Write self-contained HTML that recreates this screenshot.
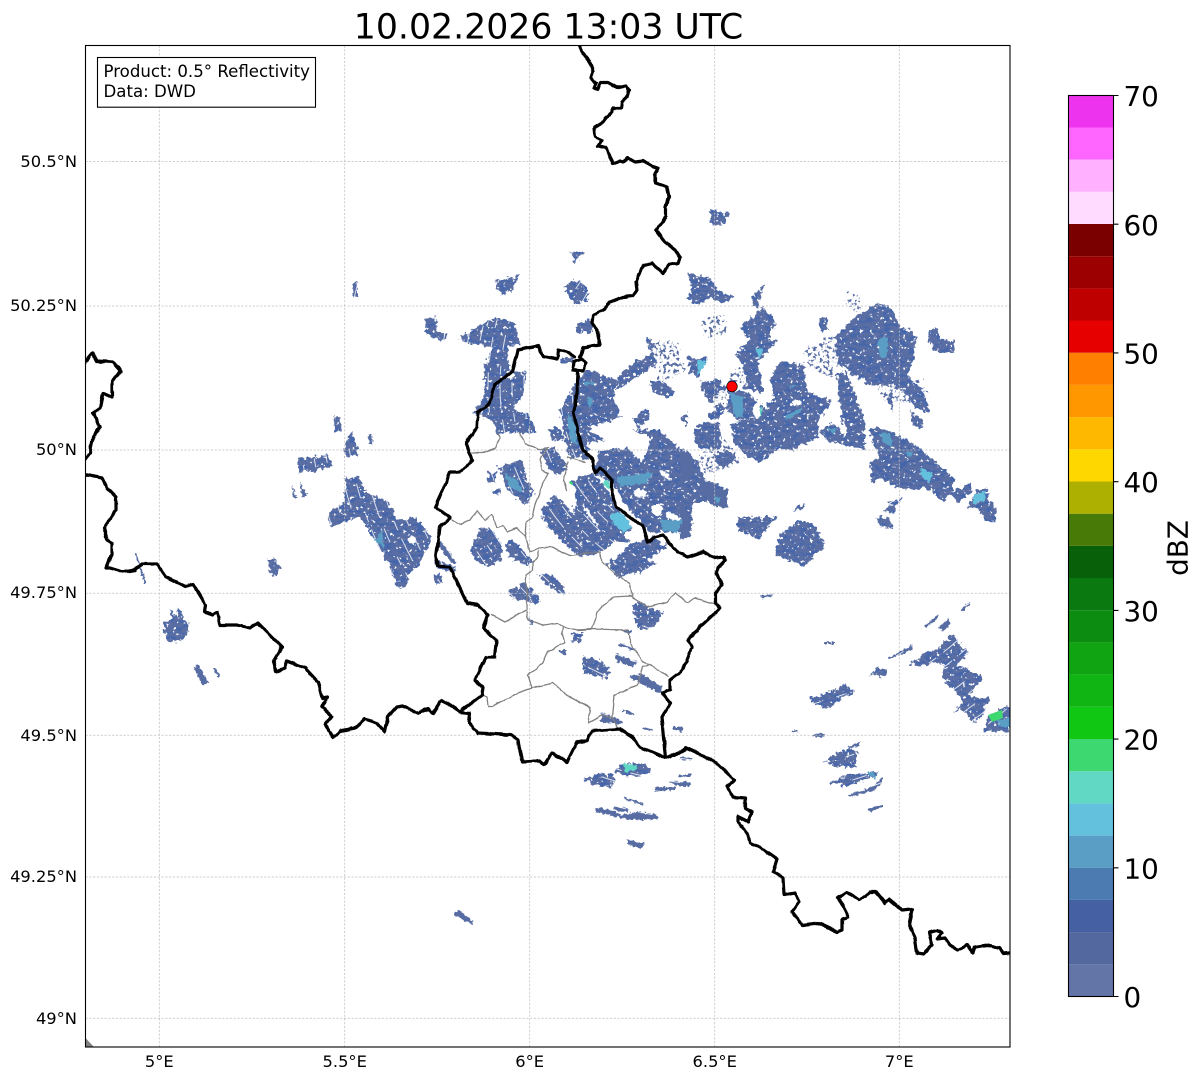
<!DOCTYPE html>
<html><head><meta charset="utf-8"><title>10.02.2026 13:03 UTC</title>
<style>
html,body{margin:0;padding:0;background:#fff;width:1202px;height:1081px;overflow:hidden}
svg{display:block}
text{font-family:"DejaVu Sans","Liberation Sans",sans-serif;fill:#000}
.g{stroke:#bfbfbf;stroke-width:.75;stroke-dasharray:2.2 1.6;fill:none}
.b{fill:none;stroke:#000;stroke-width:3.2;stroke-linejoin:round;stroke-linecap:round}
.l{fill:none;stroke:#808080;stroke-width:1.3;stroke-linejoin:round;stroke-linecap:round}
.t{font-size:16.3px}
.c{font-size:27.8px}
.arc circle{fill:none;stroke:#fff;stroke-width:1;stroke-opacity:.8;stroke-dasharray:15 12 24 9 9 16}
</style></head><body>
<svg xmlns="http://www.w3.org/2000/svg" width="1202" height="1081" viewBox="0 0 1202 1081">
<defs>
<clipPath id="ax"><rect x="85.5" y="45.5" width="924.5" height="1001.5"/></clipPath>
<clipPath id="far"><rect x="85" y="45" width="530" height="1002"/><rect x="85" y="625" width="925" height="422"/></clipPath>
<filter id="r" filterUnits="userSpaceOnUse" x="60" y="30" width="970" height="1030" color-interpolation-filters="sRGB">
<feTurbulence type="fractalNoise" baseFrequency=".23" numOctaves="2" seed="4" result="n"/>
<feDisplacementMap in="SourceGraphic" in2="n" scale="8" xChannelSelector="R" yChannelSelector="G" result="d0"/>
<feTurbulence type="fractalNoise" baseFrequency=".3" numOctaves="2" seed="21" result="q"/>
<feColorMatrix in="q" type="matrix" values="0 0 0 0 0 0 0 0 0 0 0 0 0 0 0 12 0 0 0 -3.2" result="qa"/>
<feComposite in="d0" in2="qa" operator="in" result="d"/>
<feTurbulence type="fractalNoise" baseFrequency=".12 .3" numOctaves="2" seed="9" result="m"/>
<feColorMatrix in="m" type="matrix" values="0 0 0 0 .27 0 0 0 0 .40 0 0 0 0 .67 6 0 0 0 -2.9" result="tex"/>
<feComposite in="tex" in2="d" operator="in" result="tx"/>
<feMerge><feMergeNode in="d"/><feMergeNode in="tx"/></feMerge>
</filter>
<filter id="h" filterUnits="userSpaceOnUse" x="60" y="30" width="970" height="1030" color-interpolation-filters="sRGB">
<feTurbulence type="fractalNoise" baseFrequency=".3" numOctaves="2" seed="7" result="n"/>
<feDisplacementMap in="SourceGraphic" in2="n" scale="5" xChannelSelector="R" yChannelSelector="G"/>
</filter>
<filter id="w" filterUnits="userSpaceOnUse" x="60" y="30" width="970" height="1030" color-interpolation-filters="sRGB">
<feTurbulence type="fractalNoise" baseFrequency=".1" numOctaves="2" seed="15" result="n"/>
<feDisplacementMap in="SourceGraphic" in2="n" scale="3" xChannelSelector="R" yChannelSelector="G"/>
</filter>
<filter id="s" filterUnits="userSpaceOnUse" x="60" y="30" width="970" height="1030" color-interpolation-filters="sRGB">
<feTurbulence type="fractalNoise" baseFrequency=".3" numOctaves="2" seed="12" result="n"/>
<feDisplacementMap in="SourceGraphic" in2="n" scale="14" xChannelSelector="G" yChannelSelector="R" result="d"/>
<feColorMatrix in="n" type="matrix" values="0 0 0 0 0 0 0 0 0 0 0 0 0 0 0 9 0 0 0 -4.7" result="a"/>
<feComposite in="d" in2="a" operator="in"/>
</filter>
</defs>
<rect width="1202" height="1081" fill="#fff"/>
<g clip-path="url(#ax)">
<g filter="url(#s)" fill="#566ca3">
<polygon points="805,350 822,342 838,335 838,380 820,375 808,368"/>
<polygon points="845,294 860,298 858,314 848,308"/>
<polygon points="700,322 722,316 728,335 706,340"/>
<polygon points="735,370 712,405 740,420 758,365"/>
<polygon points="650,345 675,342 686,372 660,385"/>
<polygon points="728,442 742,465 705,476 698,458"/>
<polygon points="875,380 922,382 926,405 885,402"/>
</g>
<g filter="url(#r)" fill="#5a6ea3">
<polygon points="835,337 850,320 862,313 877,303 893,310 897,323 917,337 913,363 907,373 913,383 920,387 928,403 928,413 915,407 903,390 890,385 870,385 853,375 845,367 837,360"/>
<polygon points="928,332 935,327 943,340 955,342 953,353 937,353 928,340"/>
<polygon points="837,373 847,373 857,400 865,423 865,450 853,447 843,423 838,393"/>
<polygon points="820,430 833,423 843,433 853,433 860,450 843,443 830,443 822,435"/>
<polygon points="868,430 877,427 893,433 913,443 933,460 953,477 953,490 943,502 927,487 900,490 880,477 872,485 870,463 880,457"/>
<polygon points="950,493 970,483 972,492 958,503"/>
<polygon points="967,507 977,490 987,487 988,500 997,510 995,523 985,520 977,507"/>
<polygon points="883,512 892,502 903,498 893,513"/>
<polygon points="875,518 887,517 893,528 883,527"/>
<polygon points="910,410 923,420 922,428 912,425"/>
<polygon points="887,393 893,397 893,412 888,403"/>
<polygon points="818,318 826,318 828,330 820,330"/>
<polygon points="770,377 780,362 803,365 808,393 833,400 820,417 818,437 793,450 780,448 760,462 747,457 733,442 730,423 757,417 773,397"/>
<polygon points="728,390 747,392 763,407 757,417 737,420 728,410"/>
<polygon points="740,328 763,307 777,322 767,340 777,340 770,348 757,363 763,380 763,393 747,388 743,363 735,355 750,340"/>
<polygon points="752,297 765,283 758,307 753,308"/>
<polygon points="688,273 710,278 717,290 735,297 723,303 710,297 700,305 687,300 692,288"/>
<polygon points="687,357 708,358 698,377 690,373"/>
<polygon points="700,383 720,378 723,388 710,403 705,397"/>
<polygon points="707,417 720,403 725,410 717,420"/>
<polygon points="693,430 703,422 720,423 722,447 700,450 695,442"/>
<polygon points="713,457 725,450 737,457 722,468"/>
<polygon points="737,517 777,517 767,527 760,540 738,530"/>
<polygon points="780,535 800,520 815,525 825,545 805,567 790,560 775,555"/>
<polygon points="793,510 805,503 802,510"/>
<polygon points="710,210 728,213 725,225 712,225"/>
<polygon points="570,252 583,252 575,263"/>
<polygon points="495,282 520,275 513,290 502,295"/>
<polygon points="563,287 575,280 588,288 587,302 575,305"/>
<polygon points="425,320 435,317 438,332 448,333 443,342 425,333"/>
<polygon points="460,337 495,317 515,323 520,343 507,347 510,370 527,373 522,397 513,407 530,417 537,433 513,433 497,433 493,420 473,413 483,397 485,367 492,347 467,343"/>
<polygon points="547,430 560,427 563,440 553,442"/>
<polygon points="560,410 577,380 587,370 618,380 613,397 622,417 607,423 587,427 605,440 587,443 590,460 570,457 563,433"/>
<polygon points="575,327 590,317 593,332 578,332"/>
<polygon points="560,360 575,357 572,363 562,363"/>
<polygon points="618,377 633,363 653,353 643,337 650,337 657,363 637,377 617,390"/>
<polygon points="650,380 663,382 677,393 667,397 653,393"/>
<polygon points="633,420 647,408 650,417 637,430"/>
<polygon points="680,417 687,413 687,427"/>
<polygon points="600,450 627,448 642,462 653,437 633,430 660,430 677,447 697,460 703,477 727,490 727,508 707,503 693,503 690,530 663,533 650,533 627,507 613,483 593,473"/>
<polygon points="542,507 557,495 573,513 577,490 570,480 593,473 610,493 617,510 633,530 627,542 617,540 600,552 580,557 563,543 543,520"/>
<polygon points="627,545 653,537 668,547 647,560 657,563 640,572 617,577 607,563 623,553"/>
<polygon points="540,450 553,447 568,467 560,477 548,468"/>
<polygon points="498,467 523,460 527,480 535,493 525,505 508,490"/>
<polygon points="488,473 497,472 495,483 488,482"/>
<polygon points="492,492 500,488 502,493 493,495"/>
<polygon points="470,550 480,528 490,528 502,543 502,560 490,567 477,562"/>
<polygon points="505,543 513,540 533,562 527,565 510,558"/>
<polygon points="507,592 525,583 540,598 537,605 527,600 513,600"/>
<polygon points="538,575 552,575 565,588 563,595 550,587"/>
<polygon points="632,605 642,603 662,613 658,622 647,630 637,627"/>
<polygon points="572,633 583,633 580,642 573,643"/>
<polygon points="583,657 598,660 612,672 607,678 583,673"/>
<polygon points="616,767 625,763 643,763 651,768 650,773 633,777 617,773"/>
<polygon points="600,773 614,774 612,787 597,786 583,779"/>
<polygon points="910,663 927,652 935,650 953,635 968,652 957,665 980,675 982,680 968,697 990,698 980,720 973,722 960,708 952,715 963,700 942,678 945,665 935,662 920,667"/>
<polygon points="982,733 990,715 1003,707 1012,708 1012,730 1000,732 990,730"/>
<polygon points="867,677 877,667 888,670 887,675 880,678 873,673"/>
<polygon points="810,699 833,690 845,684 855,693 840,700 827,709 815,705"/>
<polygon points="825,762 837,753 850,748 858,753 855,767 848,768 832,765"/>
<polygon points="830,782 850,775 878,772 875,777 857,782 847,787 833,784"/>
<polygon points="333,417 340,417 342,431 335,431"/>
<polygon points="345,443 351,430 357,447 359,455 345,457"/>
<polygon points="298,459 328,455 333,467 298,473"/>
<polygon points="328,513 345,502 345,478 358,477 367,493 387,500 397,520 417,517 432,540 420,562 410,573 405,588 397,588 390,567 377,543 360,517 337,525 330,527"/>
<polygon points="267,560 275,558 281,572 272,577"/>
<polygon points="163,623 173,617 170,610 177,617 178,607 187,623 188,633 182,640 170,643 165,633"/>
<polygon points="437,560 457,567 452,573 435,567"/>
<polygon points="433,575 440,573 443,583 437,585"/>
</g>
<g filter="url(#h)" fill="#566ca3">
<polygon points="680,450 690,453 695,473 680,487"/>
<polygon points="698,477 713,487 727,490 727,508 712,505 700,487"/>
<polygon points="680,498 692,520 690,537 680,540"/>
<polygon points="618,643 637,648 635,651 618,646"/>
<polygon points="615,653 637,662 633,667 617,662"/>
<polygon points="628,677 640,673 663,687 660,693"/>
<polygon points="620,630 633,630 630,634"/>
<polygon points="557,650 567,650 565,655"/>
<polygon points="527,618 535,622 532,625"/>
<polygon points="595,808 610,810 622,815 637,812 657,814 657,819 632,820 617,817 595,812"/>
<polygon points="613,807 627,808 628,812 613,810"/>
<polygon points="627,840 644,843 643,849 627,845"/>
<polygon points="623,797 644,803 643,805 623,799"/>
<polygon points="455,912 458,910 473,921 472,924 455,916"/>
<polygon points="654,787 675,787 675,790 655,791"/>
<polygon points="670,781 690,782 690,786 677,786 670,783"/>
<polygon points="678,774 692,774 690,777 678,777"/>
<polygon points="680,757 693,757 692,760 680,760"/>
<polygon points="673,727 683,727 683,732 673,730"/>
<polygon points="642,727 653,729 653,731 642,729"/>
<polygon points="622,710 633,713 633,715 622,712"/>
<polygon points="602,712 623,722 622,724 600,722"/>
<polygon points="888,658 912,645 913,649 900,655 890,659"/>
<polygon points="924,627 937,615 938,618 927,627"/>
<polygon points="939,627 948,619 951,623 943,631"/>
<polygon points="961,610 969,602 970,604 963,611"/>
<polygon points="825,642 835,642 834,644 825,644"/>
<polygon points="792,730 798,730 798,732 792,732"/>
<polygon points="812,735 825,733 825,737 813,737"/>
<polygon points="848,747 860,742 860,745 850,749"/>
<polygon points="848,795 870,788 882,778 882,783 875,790 850,797"/>
<polygon points="868,808 883,805 883,807 869,812"/>
<polygon points="760,595 773,594 770,597 762,599"/>
<polygon points="292,485 297,498 293,499"/>
<polygon points="300,482 307,495 302,497"/>
<polygon points="368,434 372,434 373,445 369,445"/>
<polygon points="193,667 199,665 209,683 203,686"/>
<polygon points="213,668 216,668 220,677 217,677"/>
<polygon points="135,553 137,553 146,583 144,583"/>
<polygon points="353,285 357,282 357,297 353,297"/>
<polygon points="440,540 457,563 452,563 438,545"/>
</g>
<g class="arc" clip-path="url(#far)">
<circle cx="732" cy="386" r="160"/><circle cx="732" cy="386" r="172"/><circle cx="732" cy="386" r="184"/><circle cx="732" cy="386" r="196"/><circle cx="732" cy="386" r="208"/><circle cx="732" cy="386" r="220"/><circle cx="732" cy="386" r="232"/><circle cx="732" cy="386" r="244"/><circle cx="732" cy="386" r="256"/><circle cx="732" cy="386" r="268"/><circle cx="732" cy="386" r="280"/><circle cx="732" cy="386" r="292"/><circle cx="732" cy="386" r="304"/><circle cx="732" cy="386" r="316"/><circle cx="732" cy="386" r="328"/><circle cx="732" cy="386" r="340"/><circle cx="732" cy="386" r="352"/><circle cx="732" cy="386" r="364"/><circle cx="732" cy="386" r="376"/><circle cx="732" cy="386" r="388"/><circle cx="732" cy="386" r="400"/><circle cx="732" cy="386" r="412"/><circle cx="732" cy="386" r="424"/><circle cx="732" cy="386" r="436"/><circle cx="732" cy="386" r="448"/>
</g>
<g fill="#fff" filter="url(#h)">
<ellipse cx="797" cy="403" rx="5" ry="3"/>
<ellipse cx="757" cy="411" rx="4" ry="8"/>
<ellipse cx="640" cy="493" rx="7" ry="4"/>
<ellipse cx="665" cy="475" rx="7" ry="2.5" transform="rotate(40 665 475)"/>
<ellipse cx="657" cy="510" rx="6" ry="6"/>
<ellipse cx="673" cy="517" rx="9" ry="3" transform="rotate(25 673 517)"/>
<ellipse cx="590" cy="515" rx="14" ry="1.6" transform="rotate(55 590 515)"/>
<ellipse cx="568" cy="505" rx="12" ry="1.5" transform="rotate(55 568 505)"/>
<ellipse cx="630" cy="535" rx="6" ry="4"/>
<ellipse cx="412" cy="540" rx="4" ry="4"/>
<ellipse cx="510" cy="375" rx="4" ry="4"/>
</g>
<g filter="url(#h)" fill="#5a9ec5">
<polygon points="877,340 888,337 887,357 880,357"/>
<polygon points="903,452 913,452 910,457"/>
<polygon points="827,428 837,428 833,435"/>
<polygon points="730,393 743,397 743,417 735,417"/>
<polygon points="783,417 803,407 800,413 787,420"/>
<polygon points="787,385 797,385 793,388"/>
<polygon points="617,477 653,472 647,483 620,487"/>
<polygon points="660,520 683,520 677,533 662,530"/>
<polygon points="503,473 517,480 523,493 510,487"/>
<polygon points="567,413 575,423 578,447 570,440"/>
<polygon points="587,397 593,400 590,410"/>
<polygon points="583,382 595,382 595,385 583,385"/>
<polygon points="713,497 722,498 717,503"/>
<polygon points="375,540 382,530 384,548"/>
<polygon points="867,773 875,772 875,780"/>
<polygon points="997,720 1012,718 1012,728 1000,727"/>
<polygon points="880,433 890,433 893,447 883,443"/>
</g>
<g filter="url(#h)" fill="#64c1de">
<polygon points="698,360 707,360 697,377"/>
<polygon points="755,348 763,348 760,358"/>
<polygon points="920,467 933,473 930,483 922,477"/>
<polygon points="973,497 985,490 985,500 973,505"/>
<polygon points="610,513 623,513 632,527 623,533 613,523"/>
</g>
<g filter="url(#h)" fill="#60d8c4">
<polygon points="605,480 612,485 612,490 603,485"/>
<polygon points="760,407 763,407 760,420"/>
<polygon points="624,763 637,765 637,769 625,773"/>
</g>
<polygon points="988,715 1002,710 1003,718 992,722" fill="#3dd86f"/>
<polygon points="570,481 573,483 572,485 569,483" fill="#3dd86f"/>
<path d="M85.5 1038L94 1047H85.5Z" fill="#808080"/>
<g class="g">
<path d="M159.3 45.5V1047M344.7 45.5V1047M529.7 45.5V1047M714.7 45.5V1047M899.3 45.5V1047"/>
<path d="M85.5 161.5H1010M85.5 306H1010M85.5 450H1010M85.5 593.3H1010M85.5 735.3H1010M85.5 877H1010M85.5 1018.3H1010"/>
</g>
<g class="l" filter="url(#w)">
<path d="M472 453L483 453 495 448 500 438 498 433"/>
<path d="M520 433L525 443 538 450 548 447 540 460 542 470 548 473 543 483 535 505 532 518 526 522 525 537 530 552"/>
<path d="M568 457L577 460 585 462M568 462L563 480 567 490"/>
<path d="M452 520L460 525 470 520 477 510 485 520 492 515 497 527 503 525 507 532 517 528 525 537"/>
<path d="M530 552L538 548 552 547 563 553 570 556 585 554 600 552 602 562 617 575 630 583 632 597"/>
<path d="M538 550L538 557 533 562 533 570 526 575 525 582 527 593 527 610 505 622 492 615"/>
<path d="M527 612L528 620 543 625 557 623 563 627 578 630 592 629 597 612 613 597 630 596 648 607 667 602 675 593 687 603 695 598 715 604"/>
<path d="M563 627L562 633 565 643 557 646 548 652 543 663 528 675 532 688 553 683 567 695 590 708 588 723 602 715 612 717 617 728"/>
<path d="M578 630L592 629 627 630 633 647 643 662 650 665 668 677"/>
<path d="M612 717L614 695 637 685 643 667 650 665"/>
<path d="M532 688L518 693 510 697 492 707 488 707 487 697 482 695"/>
</g>
<g class="b" filter="url(#w)">
<path d="M578 43L583 53 590 62 593 72 591 78 596 83 594 88 598 89 600 83 608 83 617 88 626 86 629 90 627 97 622 102 621 108 613 108 612 112 605 119 602 123 594 128 595 137 602 140 598 146 606 148 613 164 620 161 623 162 628 158 635 162 643 161 652 166 658 168 655 175 655 183 667 187 669 197 666 207 666 217 656 230 665 242 675 250 680 258 678 263 668 265 663 273 652 263 643 265 639 275 636 282 637 290 633 296 623 297 610 302 603 310 593 315 592 323 597 330 600 345 583 348 580 357"/>
<path d="M580 357L586 363 583 371 573 370 574 362 580 360"/>
<path d="M575 357L567 352 558 350 557 359 543 356 538 346 518 350 513 370 495 385 490 403 478 412 477 427 466 443 472 460 460 472 450 472 445 485 435 507 450 518 440 527 436 557 438 566 450 567 467 603 478 605 488 615 483 628 497 640 495 657 486 657 475 680 483 687 482 695 462 710"/>
<path d="M578 372L577 393 573 413 578 433 583 450 593 460 595 473 600 468 612 480 612 493 617 507 633 520 643 525 648 542 655 537 663 535 677 552 688 557 703 552 715 558 723 557 725 560 718 567 717 573 722 585 715 593 715 603 720 608 715 613 700 627 688 640 692 647 683 670 670 680 670 690 662 693 670 703 662 717 666 758"/>
<path d="M440 702L442 700 460 712 470 713 469 723 478 733 495 734 510 735 518 740 522 762 540 761 544 765 552 753 567 762 577 742 587 740 592 731 620 729 633 738 640 747 666 758 678 753 687 748 702 755 717 763 735 780 727 787 733 797 745 798 745 808 752 812 748 822 738 817 738 822 748 835 750 843 760 847 777 859 773 872 783 877 784 895 795 893 799 902 792 912 802 925 818 923 837 932 842 930 842 919 848 917 843 905 838 898 847 892 859 900 870 892 876 892 885 903 889 899 902 910 912 909 909 925 915 938 917 953 923 954 932 945 929 932 937 930 942 933 937 939 945 938 950 945 958 950 967 945 973 953 975 947 988 945 1000 948 1003 953 1014 952"/>
<path d="M82 366L93 353 97 361 113 362 121 371 112 381 112 397 103 393 100 408 93 413 100 427 93 437 90 453 82 463"/>
<path d="M82 474L102 478 107 488 116 497 116 510 104 528 107 540 112 543 112 553 106 568 110 568 123 572 135 570 142 564 157 564 166 577 185 586 193 584 206 605 205 612 212 615 217 612 220 625 237 625 250 628 258 623 282 647 273 662 276 672 285 668 287 661 305 668 318 682 322 698 327 697 322 707 332 716 325 725 333 737 340 731 355 728 365 719 377 723 385 732 388 717 397 707 403 706 418 713 428 709 433 713 440 702"/>
</g>
<circle cx="732" cy="386.5" r="5.3" fill="#f00" stroke="#000" stroke-width=".7"/>
</g>
<rect x="85.5" y="45.5" width="924.5" height="1001.5" fill="none" stroke="#000" stroke-width="1.1"/>
<rect x="97.5" y="57.5" width="218" height="49.7" fill="#fff" stroke="#000" stroke-width="1.1"/>
<text x="103.5" y="77" style="font-size:16.6px">Product: 0.5° Reflectivity</text>
<text x="103.5" y="97" style="font-size:16.6px">Data: DWD</text>
<text x="548.5" y="38.5" text-anchor="middle" style="font-size:34.7px">10.02.2026 13:03 UTC</text>
<g class="t" text-anchor="end">
<text x="77" y="167">50.5°N</text>
<text x="77" y="311">50.25°N</text>
<text x="77" y="455">50°N</text>
<text x="77" y="598">49.75°N</text>
<text x="77" y="741">49.5°N</text>
<text x="77" y="882">49.25°N</text>
<text x="77" y="1024">49°N</text>
</g>
<g class="t" text-anchor="middle">
<text x="159.3" y="1067">5°E</text>
<text x="344.7" y="1067">5.5°E</text>
<text x="529.7" y="1067">6°E</text>
<text x="714.7" y="1067">6.5°E</text>
<text x="899.3" y="1067">7°E</text>
</g>
<g>
<rect x="1068.5" y="964.3" width="45" height="32.2" fill="#6374a6"/>
<rect x="1068.5" y="932.1" width="45" height="32.2" fill="#53689f"/>
<rect x="1068.5" y="899.9" width="45" height="32.2" fill="#4560a3"/>
<rect x="1068.5" y="867.7" width="45" height="32.2" fill="#4b7bb1"/>
<rect x="1068.5" y="835.6" width="45" height="32.2" fill="#5a9ec5"/>
<rect x="1068.5" y="803.4" width="45" height="32.2" fill="#64c1de"/>
<rect x="1068.5" y="771.2" width="45" height="32.2" fill="#60d8c4"/>
<rect x="1068.5" y="739" width="45" height="32.2" fill="#3dd86f"/>
<rect x="1068.5" y="706.8" width="45" height="32.2" fill="#10c814"/>
<rect x="1068.5" y="674.6" width="45" height="32.2" fill="#10b514"/>
<rect x="1068.5" y="642.4" width="45" height="32.2" fill="#10a412"/>
<rect x="1068.5" y="610.2" width="45" height="32.2" fill="#0c8c10"/>
<rect x="1068.5" y="578" width="45" height="32.2" fill="#0a7a10"/>
<rect x="1068.5" y="545.9" width="45" height="32.2" fill="#086008"/>
<rect x="1068.5" y="513.7" width="45" height="32.2" fill="#487a08"/>
<rect x="1068.5" y="481.5" width="45" height="32.2" fill="#adb000"/>
<rect x="1068.5" y="449.3" width="45" height="32.2" fill="#ffd700"/>
<rect x="1068.5" y="417.1" width="45" height="32.2" fill="#ffb800"/>
<rect x="1068.5" y="384.9" width="45" height="32.2" fill="#ff9800"/>
<rect x="1068.5" y="352.7" width="45" height="32.2" fill="#ff7f00"/>
<rect x="1068.5" y="320.5" width="45" height="32.2" fill="#e60000"/>
<rect x="1068.5" y="288.4" width="45" height="32.2" fill="#bf0000"/>
<rect x="1068.5" y="256.2" width="45" height="32.2" fill="#9c0000"/>
<rect x="1068.5" y="224" width="45" height="32.2" fill="#7a0000"/>
<rect x="1068.5" y="191.8" width="45" height="32.2" fill="#ffdcff"/>
<rect x="1068.5" y="159.6" width="45" height="32.2" fill="#ffb0ff"/>
<rect x="1068.5" y="127.4" width="45" height="32.2" fill="#ff66ff"/>
<rect x="1068.5" y="95.5" width="45" height="32" fill="#ee33ee"/>
<rect x="1068.5" y="95.5" width="45" height="901" fill="none" stroke="#000" stroke-width="1.1"/>
<path d="M1113.5 95.5h5M1113.5 224.2h5M1113.5 352.9h5M1113.5 481.7h5M1113.5 610.4h5M1113.5 739.1h5M1113.5 867.8h5M1113.5 996.5h5" stroke="#000" stroke-width="1.1"/>
</g>
<g class="c">
<text x="1123.5" y="106">70</text>
<text x="1123.5" y="235">60</text>
<text x="1123.5" y="363.5">50</text>
<text x="1123.5" y="492">40</text>
<text x="1123.5" y="621">30</text>
<text x="1123.5" y="749.5">20</text>
<text x="1123.5" y="878.5">10</text>
<text x="1123.5" y="1007">0</text>
</g>
<text class="c" transform="translate(1187.5 548) rotate(-90)" text-anchor="middle">dBZ</text>
</svg>
</body></html>
